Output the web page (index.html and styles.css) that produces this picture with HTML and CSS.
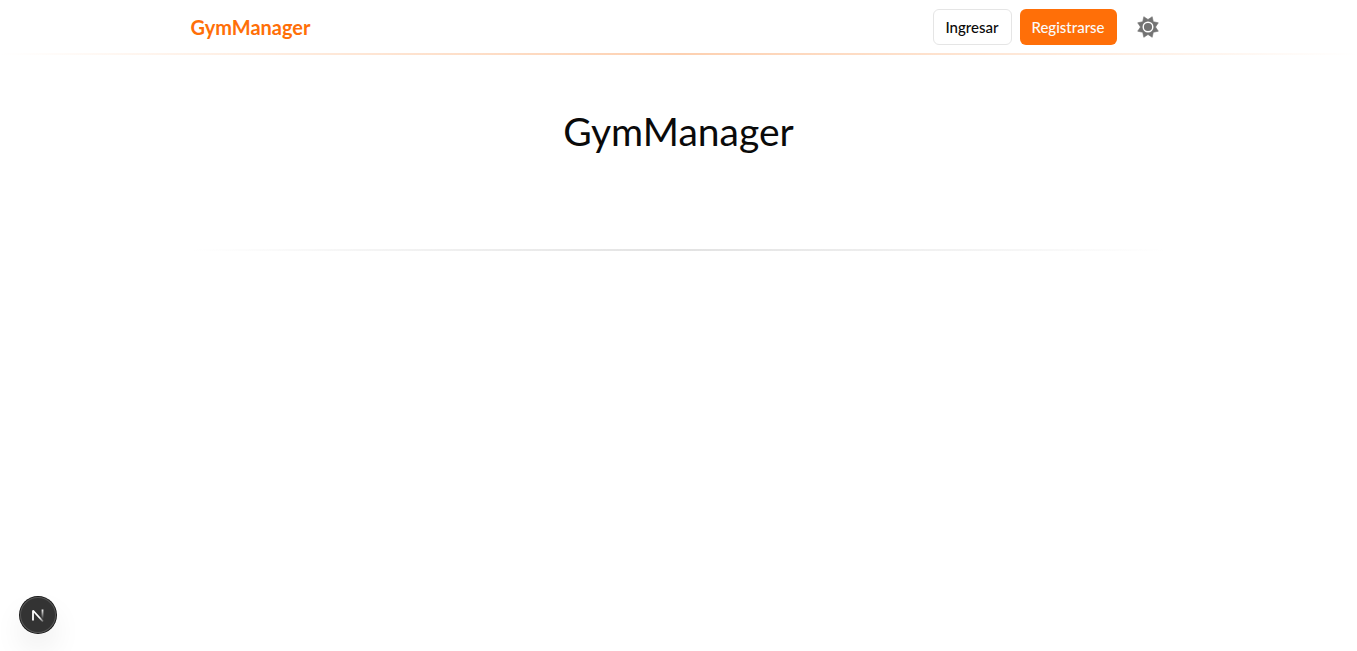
FILE: index.html
```html
<!DOCTYPE html>
<html lang="es">
<head>
<meta charset="utf-8">
<meta name="viewport" content="width=device-width, initial-scale=1">
<title>GymManager</title>
<link rel="stylesheet" href="styles.css">
</head>
<body>
<header class="header">
  <nav class="nav container">
    <a class="brand" href="#">GymManager</a>
    <div class="actions">
      <button class="button button-outline" type="button">Ingresar</button>
      <button class="button button-primary" type="button">Registrarse</button>
      <button class="theme" type="button" aria-label="Cambiar tema">
        <svg viewBox="-11 -11 22 22" width="22" height="22" aria-hidden="true">
          <path fill="#737373" d="M0-7.500 4.200-10.300 5.300-5.300 10.300-4.200 7.500 0 10.300 4.200 5.300 5.300 4.200 10.300 0 7.500-4.200 10.300-5.300 5.300-10.300 4.200-7.500 0-10.300-4.200-5.300-5.300-4.200-10.300Z" stroke="#737373" stroke-width=".6" stroke-linejoin="round"/>
          <circle r="4.800" fill="none" stroke="#fff" stroke-width="1.400"/>
        </svg>
      </button>
    </div>
  </nav>
  <div class="line line-orange"></div>
</header>
<main class="container">
  <section class="hero">
    <h1 class="title">GymManager</h1>
  </section>
  <div class="line line-gray"></div>
</main>
<button class="dev" type="button" aria-label="Next.js">
  <svg viewBox="0 0 14 14" width="14" height="14" fill="none" aria-hidden="true">
    <defs>
      <linearGradient id="stem" x1="0" y1="1" x2="0" y2="11" gradientUnits="userSpaceOnUse"><stop stop-color="#fff"/><stop offset="1" stop-color="#fff" stop-opacity="0"/></linearGradient>
      <linearGradient id="slope" x1="9" y1="9" x2="13" y2="14" gradientUnits="userSpaceOnUse"><stop stop-color="#fff"/><stop offset="1" stop-color="#fff" stop-opacity=".1"/></linearGradient>
    </defs>
    <path d="M2 12.500V2.500L12 13.500" stroke="url(#slope)" stroke-width="1.800" stroke-linejoin="bevel"/>
    <path d="M11.500 1.500V11.500" stroke="url(#stem)" stroke-width="1.800"/>
  </svg>
</button>
</body>
</html>
```
FILE: styles.css
```css
* { box-sizing: border-box; }
body {
  margin: 0;
  background: #fff;
  color: #0a0a0a;
  font-family: Lato, "Liberation Sans", sans-serif;
}
.container {
  max-width: 1024px;
  margin: 0 auto;
  padding: 0 24px;
}
.nav {
  display: flex;
  align-items: center;
  justify-content: space-between;
  padding-top: 8px;
  padding-bottom: 7px;
}
.brand {
  color: #ff6f08;
  font-size: 20px;
  line-height: 28px;
  font-weight: 700;
  text-decoration: none;
}
.actions {
  display: flex;
  align-items: center;
  gap: 8px;
}
.button {
  height: 36px;
  padding: 0 10px;
  border: 1px solid transparent;
  border-radius: 6px;
  font: 500 15px/20px Lato, "Liberation Sans", sans-serif;
}
.button-outline {
  min-width: 79px;
  border-color: #e5e5e5;
  background: #fff;
  color: #0a0a0a;
}
.button-primary {
  min-width: 97px;
  background: #ff6f08;
  color: #fafafa;
}
.theme {
  display: flex;
  margin-left: 4px;
  padding: 8px;
  border: 0;
  background: none;
}
.line { height: 2px; }
.line-orange { background: linear-gradient(90deg, transparent, #fdd0b0, transparent); }
.line-gray { background: linear-gradient(90deg, transparent, #e2e2e2, transparent); }
.hero {
  padding: 52px 0 94px;
  text-align: center;
}
.title {
  margin: 0;
  font-size: 39px;
  line-height: 48px;
  font-weight: 400;
}
.dev {
  position: fixed;
  left: 20px;
  bottom: 18px;
  display: grid;
  place-items: center;
  width: 36px;
  height: 36px;
  padding: 0;
  border: 0;
  border-radius: 50%;
  background: #333;
  box-shadow: 0 0 0 1px #171717, inset 0 0 0 1px #555, 0 16px 32px -4px rgba(0, 0, 0, .12);
}
```
